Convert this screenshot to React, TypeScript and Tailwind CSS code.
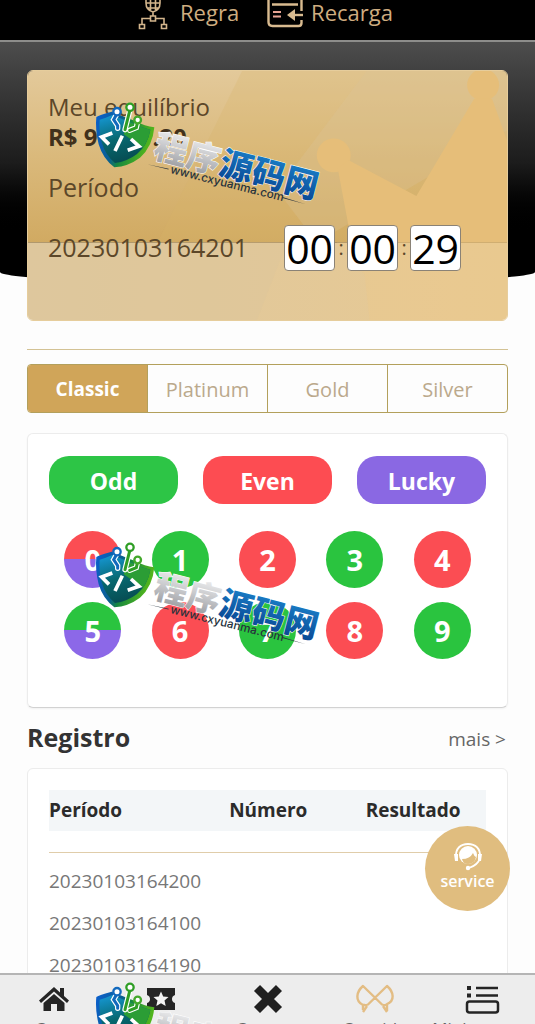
import React, { useState } from 'react';

const tabs = ['Classic', 'Platinum', 'Gold', 'Silver'];

const bets = [
  { label: 'Odd', color: 'bg-[#2dc546]' },
  { label: 'Even', color: 'bg-[#fd4c52]' },
  { label: 'Lucky', color: 'bg-[#8a68e3]' },
];

const GREEN = 'bg-[#2ac43f]';
const RED = 'bg-[#fb4d53]';

const balls = [
  'bg-[linear-gradient(#fb4d53_50%,#8c68e8_50%)]',
  GREEN,
  RED,
  GREEN,
  RED,
  'bg-[linear-gradient(#2ac43f_50%,#8c68e8_50%)]',
  RED,
  GREEN,
  RED,
  GREEN,
];

const records = ['20230103164200', '20230103164100', '20230103164190', '20230103164180'];

const RulesIcon: React.FC = () => (
  <svg className="h-[30px] w-[30px] shrink-0" viewBox="0 0 30 30" fill="none" stroke="#d3b58c" strokeWidth="1.6">
    <path d="M8 0v3c0 5 3 8 7 9 4-1 7-4 7-9V0M8 3h14M10 8h10M12.500 0v10M17.500 0v10M15 12v4" />
    <path d="M12.500 16h5v5h-5zM12.500 18.500H4V24M17.500 18.500H26V24" />
    <path d="M1.500 24.500h5v4h-5zM23.500 24.500h5v4h-5z" />
  </svg>
);

const RechargeIcon: React.FC = () => (
  <svg className="h-7 w-9 shrink-0" viewBox="0 0 36 28" fill="none" stroke="#d9bb90" strokeWidth="2.400">
    <path d="M1.500 0v22q0 4 4 4h26q3 0 3-3v-3M34.500 11V0M5 4.500h26" />
    <path d="M6 12h8M6 16.500h8" strokeWidth="2" stroke="#e8a494" />
    <path d="M36 15H22" />
    <path d="M28 9v12l-8-6z" fill="#d9bb90" stroke="none" />
  </svg>
);

const CardArt: React.FC = () => (
  <svg className="absolute inset-0 h-full w-full" viewBox="0 0 481 251" preserveAspectRatio="none">
    <defs>
      <linearGradient id="sand" x1="0" y1="0" x2="0" y2="1">
        <stop offset="0" stopColor="#e3c99a" />
        <stop offset="0.500" stopColor="#dab97b" />
        <stop offset="1" stopColor="#d1aa62" />
      </linearGradient>
      <linearGradient id="sandLow" x1="0" y1="0" x2="1" y2="0">
        <stop offset="0" stopColor="#dfc89e" />
        <stop offset="1" stopColor="#e7c993" />
      </linearGradient>
    </defs>
    <rect width="481" height="173" fill="url(#sand)" />
    <path d="M215 0H481V173H130Z" fill="#d9b469" opacity="0.250" />
    <path d="M290 173L250 120L340 0H481V60Z" fill="#dcc498" opacity="0.300" />
    <rect y="173" width="481" height="78" fill="url(#sandLow)" />
    <g fill="#e6be79">
      <circle cx="307" cy="85" r="17" />
      <circle cx="457" cy="14" r="16" />
      <path d="M311 98L322 90L390 126L448 28H466L481 70V173H325Z" />
    </g>
    <path d="M250 173H481V251H343L338 205L310 173Z" fill="#efc88a" opacity="0.350" />
    <path d="M260 173L230 251H0V173Z" fill="#dcc59a" opacity="0.400" />
  </svg>
);

const Watermark: React.FC<{ id: string; className: string }> = ({ id, className }) => (
  <svg className={`pointer-events-none absolute h-[115px] w-60 ${className}`} viewBox="0 0 720 345" aria-hidden="true">
    <defs>
      <linearGradient id={`${id}-edge`} x1="0" y1="0" x2="1" y2="0.300">
        <stop offset="0" stopColor="#0b5fd0" />
        <stop offset="0.450" stopColor="#0a5f8e" />
        <stop offset="0.600" stopColor="#17883f" />
        <stop offset="1" stopColor="#52b51c" />
      </linearGradient>
      <linearGradient id={`${id}-face`} x1="0.200" y1="0" x2="0.500" y2="1">
        <stop offset="0" stopColor="#1595d0" />
        <stop offset="0.500" stopColor="#07686f" />
        <stop offset="1" stopColor="#064a50" />
      </linearGradient>
      <linearGradient id={`${id}-silver`} x1="0" y1="0" x2="0" y2="1">
        <stop offset="0" stopColor="#ffffff" />
        <stop offset="0.500" stopColor="#c9cacd" />
        <stop offset="1" stopColor="#8f9196" />
      </linearGradient>
      <linearGradient id={`${id}-blue`} x1="0" y1="0" x2="0" y2="1">
        <stop offset="0" stopColor="#1d8ad2" />
        <stop offset="1" stopColor="#073f8c" />
      </linearGradient>
    </defs>
    <path d="M34 66Q38 61 80 50L150 78Q180 94 208 97Q203 155 165 188Q130 214 88 217Q54 192 41 148Q30 104 34 66Z" fill={`url(#${id}-edge)`} />
    <path d="M44 74Q60 70 82 60L146 86Q172 99 196 104Q188 150 156 177Q126 200 90 204Q62 182 50 142Q41 106 44 74Z" fill={`url(#${id}-face)`} />
    <path d="M126 80L146 86Q172 99 196 104Q191 134 174 158L116 118Z" fill="#2b9d35" />
    <g fill="none" stroke="#fff" strokeWidth="16" strokeLinecap="round">
      <path d="M96 56L86 74L98 92V100" />
      <path d="M135 44L120 104" />
      <path d="M158 80L154 98L134 106" />
    </g>
    <g fill="none" strokeWidth="9" strokeLinecap="round">
      <path d="M96 56L86 74L98 92V100" stroke="#1269bd" />
      <path d="M135 44L120 104" stroke="#2f9e25" />
      <path d="M158 80L154 98L134 106" stroke="#2f9e25" />
    </g>
    <circle cx="96" cy="50" r="11" fill="#fff" stroke="#1269bd" strokeWidth="7" />
    <circle cx="135" cy="37" r="11" fill="#fff" stroke="#2f9e25" strokeWidth="7" />
    <circle cx="158" cy="75" r="10" fill="#fff" stroke="#43a82a" strokeWidth="7" />
    <path d="M82 114L50 126L72 148M112 122L90 168M138 132L162 154L128 166" fill="none" stroke="#fff" strokeWidth="11" />
    <g transform="translate(201 186) rotate(14.500)">
      <text
        className="font-['Noto_Sans_CJK_SC',sans-serif] text-[101px] font-black"
        stroke="#fff"
        strokeWidth="3"
        paintOrder="stroke"
      >
        <tspan fill={`url(#${id}-silver)`}>程序</tspan>
        <tspan fill={`url(#${id}-blue)`}>源码网</tspan>
      </text>
    </g>
    <g transform="translate(254 234) rotate(14)" fill="#26323c">
      <text className="font-['Inter',sans-serif] text-[35px] font-medium">www.cxyuanma.com</text>
      <path d="M-72 -9L-6 -12V-9ZM346 -12L416 -8L346 -9Z" />
    </g>
  </svg>
);

const HomeIcon: React.FC = () => (
  <svg className="h-7 w-8" viewBox="0 0 32 28" fill="#252525">
    <path d="M16 2L1 15.500l2 2.500L16 6.500 29 18l2-2.500-5-4.500V3h-4v4.500z" />
    <path d="M16 9L5.500 18v8H13v-7h6v7h7.500v-8z" />
  </svg>
);

const TicketIcon: React.FC = () => (
  <svg className="h-7 w-8" viewBox="0 0 32 28">
    <path d="M2 3h28v7q-3 1-3 4t3 4v7H2v-7q3-1 3-4t-3-4z" fill="#252525" />
    <path d="M16 6.500l2.200 5 5.300.5-4 3.600 1.200 5.400-4.700-2.800-4.700 2.800 1.200-5.400-4-3.600 5.300-.5z" fill="#f4f4f4" />
  </svg>
);

const CrossIcon: React.FC = () => (
  <svg className="h-8 w-8" viewBox="0 0 32 32">
    <path d="M5 5L27 27M27 5L5 27" stroke="#202020" strokeWidth="8.500" />
  </svg>
);

const WinIcon: React.FC = () => (
  <svg className="h-8 w-10" viewBox="0 0 40 32" fill="none" stroke="#e3bd84" strokeWidth="2.400" strokeLinejoin="round">
    <path d="M8 27V22C0 18 1 9 8 3L27 21.500Q31 23 32 21C40 18 39 9 32 3L13 21.500Q9 23 8 21" />
    <path d="M8 29L12 23M32 29L28 23M32 21V28" />
  </svg>
);

const MyIcon: React.FC = () => (
  <svg className="h-8 w-9" viewBox="0 0 36 32" fill="none" stroke="#242424" strokeWidth="2.500">
    <path d="M12 5h22M12 12.500h22" />
    <path d="M3 5h4M3 12.500h4" strokeWidth="4" />
    <rect x="3" y="18.500" width="31" height="11" rx="2.500" />
  </svg>
);

const ServiceIcon: React.FC = () => (
  <svg className="h-7 w-8" viewBox="0 0 32 28">
    <circle cx="16" cy="12" r="9" fill="#fff" />
    <path d="M10 16q8 0 11-6 1 3 3 4-1 7-8 7-5 0-6-5z" fill="#e0bd7f" />
    <path d="M4 15C3 5 9 1 16 1s13 4 12 14q-2 7-11 10" fill="none" stroke="#fff" strokeWidth="1.800" />
    <path d="M2 11h4v7H3zM26 11h4l-1 7h-3z" fill="#fff" />
    <circle cx="16" cy="25" r="2.200" fill="#fff" />
  </svg>
);

const navItems = [
  { label: 'Casa', Icon: HomeIcon },
  { label: 'Regra', Icon: TicketIcon },
  { label: 'Compra', Icon: CrossIcon },
  { label: 'Convida', Icon: WinIcon },
  { label: 'Minha conta', Icon: MyIcon },
];

const App: React.FC = () => {
  const [active, setActive] = useState('Classic');

  return (
    <div className="relative flex h-screen flex-col overflow-hidden bg-[#fdfdfd] font-['Open_Sans','Noto_Sans',sans-serif] text-[#333]">
      <header className="flex h-[42px] shrink-0 items-start justify-center gap-7 border-b-2 border-[#8d8d8b] bg-black pr-1 text-[22px] leading-6 text-[#cfad80]">
        <a href="#regra" className="flex items-start gap-3">
          <RulesIcon />
          Regra
        </a>
        <a href="#recarga" className="flex items-start gap-2">
          <RechargeIcon />
          Recarga
        </a>
      </header>

      <main className="min-h-0 flex-1 overflow-hidden">
        <div className="h-[242px] rounded-b-[50%_12px] bg-linear-to-b from-[#4d4d4d] via-[#1c1c1c] via-50% to-black to-80%" />

        <div className="relative -mt-[214px] px-[27px]">
          <section className="relative h-[251px] overflow-hidden rounded-md border border-[#e6cd9c]">
            <CardArt />
            <div className="relative px-5 pt-5 text-[25px] text-[#5c4729]">
              <p className="text-[24px] leading-8">Meu equilíbrio</p>
              <p className="text-[24px] leading-7 font-bold text-[#41311c]">R$ 97251.20</p>
              <p className="mt-5 leading-8">Período</p>
              <div className="mt-[22px] flex items-center gap-9">
                <span>20230103164201</span>
                <div className="flex items-center">
                  {['00', '00', '29'].map((part, i) => (
                    <React.Fragment key={i}>
                      {i > 0 && <span className="w-3 text-center text-[20px]">:</span>}
                      <span className="w-[51px] rounded-sm border border-[#8a8276] bg-white text-center text-[41px] leading-[44px] text-black">
                        {part}
                      </span>
                    </React.Fragment>
                  ))}
                </div>
              </div>
            </div>
          </section>

          <div className="mt-7 border-t border-t-[#d3c294]" />

          <div role="tablist" className="mt-3.5 flex h-[49px] divide-x divide-[#b3a05c] overflow-hidden rounded-sm border border-[#b3a05c] text-[20px]">
            {tabs.map((tab) => (
              <button
                key={tab}
                role="tab"
                aria-selected={tab === active}
                onClick={() => setActive(tab)}
                className={tab === active ? 'flex-1 basis-0 bg-[#d0a559] pt-0.5 text-[19px] font-bold text-white' : 'flex-1 basis-0 pt-0.5 text-[#bba98c]'}
              >
                {tab}
              </button>
            ))}
          </div>

          <section className="mt-5 h-[275px] rounded-md border border-[#ececec] border-b-[#d2d2d2] bg-white px-[21px] pt-[22px] shadow-xs">
            <div className="flex justify-between">
              {bets.map(({ label, color }) => (
                <button key={label} className={`h-12 w-[129px] rounded-[20px] pt-0.5 text-[23px] font-bold text-white ${color}`}>
                  {label}
                </button>
              ))}
            </div>
            <div className="mt-[27px] grid grid-cols-5 justify-items-center gap-y-3.5">
              {balls.map((color, n) => (
                <button key={n} className={`size-[57px] rounded-full text-[29px] font-bold text-white ${color}`}>
                  {n}
                </button>
              ))}
            </div>
          </section>

          <div className="mt-3 flex h-9 items-center justify-between">
            <h2 className="text-[25px] font-bold">Registro</h2>
            <a href="#mais" className="pr-0.5 pt-0.5 text-[19px] text-[#666]">
              mais &gt;
            </a>
          </div>

          <section className="mt-3 rounded-md border border-[#ececec] bg-white px-[21px] pt-[21px]">
            <table className="w-full table-fixed text-left text-[19px]">
              <thead>
                <tr className="h-[41px] bg-[#f3f6f8] text-[#2b2b2b]">
                  <th className="w-[41%]">Período</th>
                  <th className="w-[31%] pl-px">Número</th>
                  <th className="pl-0.5">Resultado</th>
                </tr>
              </thead>
              <tbody className="text-[#777]">
                <tr className="h-[21px]" aria-hidden="true">
                  <td colSpan={3} className="border-b border-b-[#e0cdaa]" />
                </tr>
                <tr className="h-2" aria-hidden="true">
                  <td colSpan={3} />
                </tr>
                {records.map((record) => (
                  <tr key={record} className="h-[42px]">
                    <td>{record}</td>
                    <td />
                    <td />
                  </tr>
                ))}
              </tbody>
            </table>
          </section>
        </div>
      </main>

      <button className="absolute right-[25px] bottom-[113px] flex size-[85px] flex-col items-center justify-center rounded-full bg-[#e0bd7f] pb-1 text-[16px] leading-5 font-semibold text-white">
        <ServiceIcon />
        service
      </button>

      <nav className="grid h-[51px] shrink-0 grid-cols-5 overflow-hidden border-t-2 border-[#b5b5b5] bg-[#ededed] text-[17px] text-[#666]">
        {navItems.map(({ label, Icon }) => (
          <a key={label} href={`#${label.toLowerCase().replace(' ', '-')}`} className="flex flex-col items-center gap-0.5 pt-2 whitespace-nowrap">
            <span className="flex h-8 shrink-0 items-center">
              <Icon />
            </span>
            <span className="leading-6">{label}</span>
          </a>
        ))}
      </nav>

      <Watermark id="wm-a" className="top-[95px] left-[85px]" />
      <Watermark id="wm-b" className="top-[535px] left-[85px]" />
      <Watermark id="wm-c" className="top-[975px] left-[85px]" />
    </div>
  );
};

export default App;
